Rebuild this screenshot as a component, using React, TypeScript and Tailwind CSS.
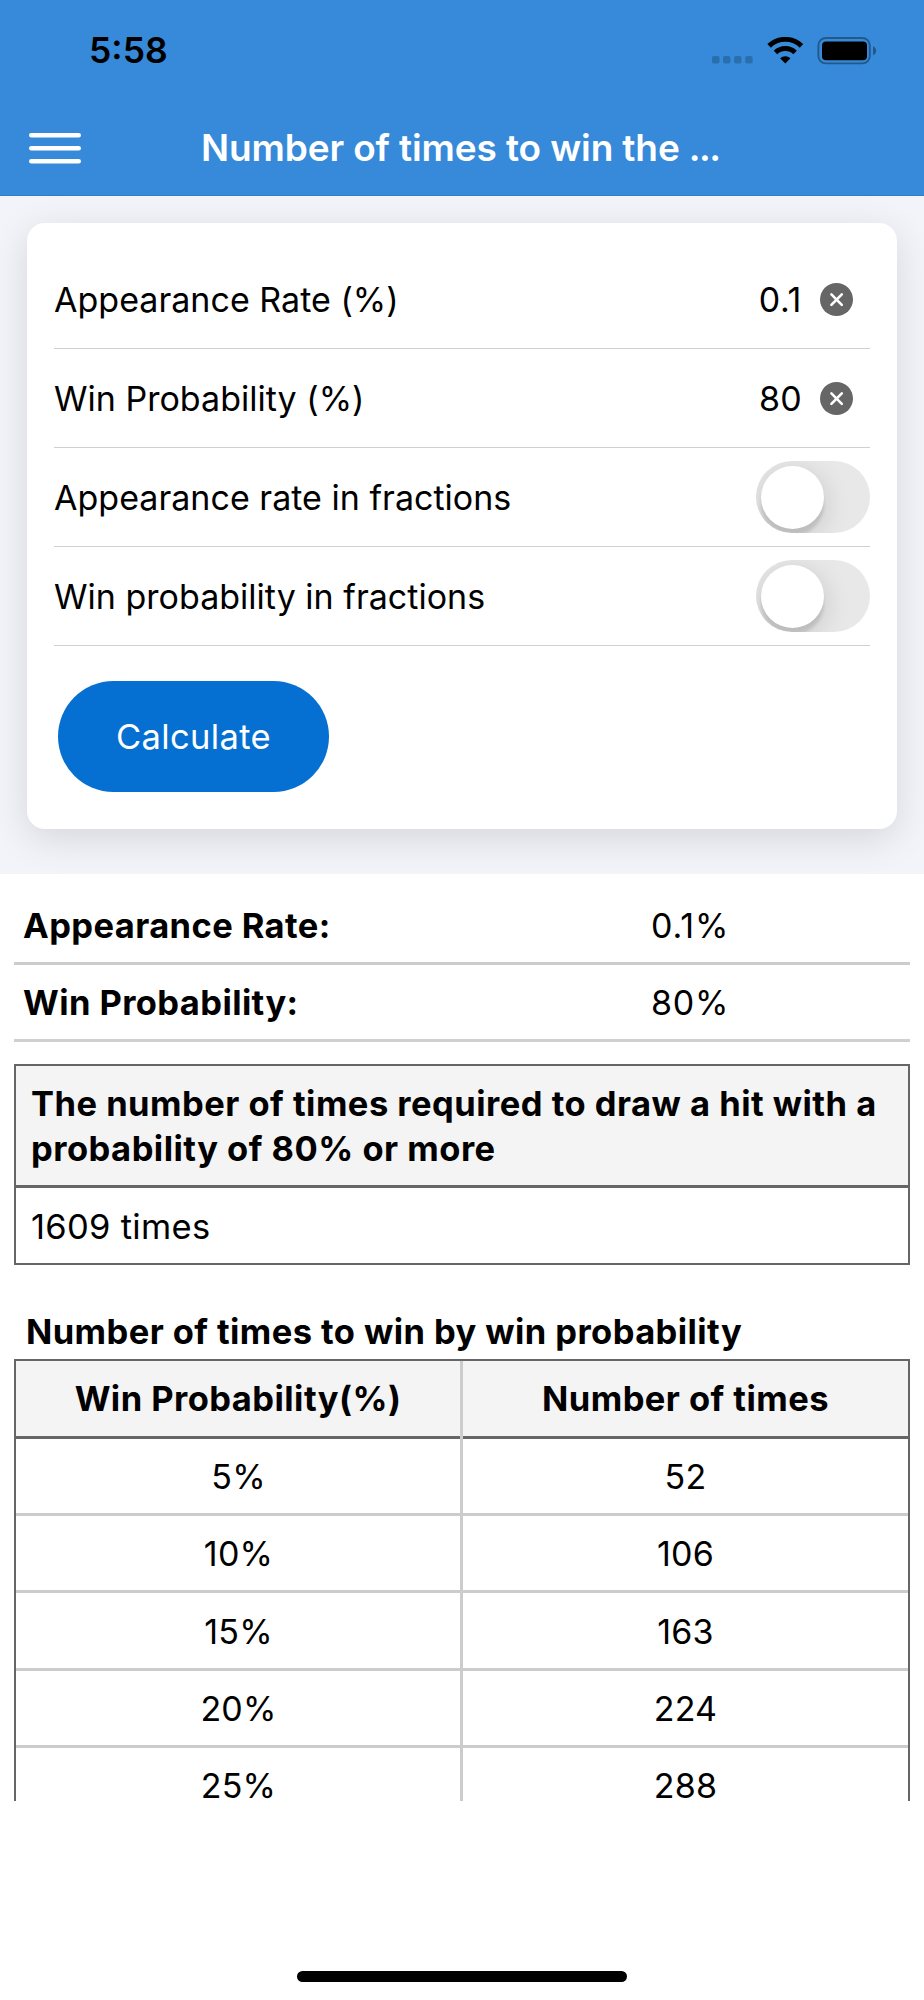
import { useState } from "react";
import { clsx } from "clsx";

const results = [
  { rate: "5%", times: "52" },
  { rate: "10%", times: "106" },
  { rate: "15%", times: "163" },
  { rate: "20%", times: "224" },
  { rate: "25%", times: "288" },
];

function StatusBar() {
  return (
    <div className="flex h-[101px] items-center justify-between pl-[89px] pr-[47px]">
      <span className="text-[35.5px] leading-none font-semibold text-black">5:58</span>
      <div className="flex items-center">
        <svg width="42" height="28" viewBox="0 0 42 28" fill="#2a6fad">
          <rect x="0" y="19" width="7.5" height="7.5" rx="2" />
          <rect x="11" y="19" width="7.5" height="7.5" rx="2" />
          <rect x="22" y="19" width="7.5" height="7.5" rx="2" />
          <rect x="33.2" y="19" width="7.5" height="7.5" rx="2" />
        </svg>
        <svg className="ml-[13px]" width="37" height="28" viewBox="0 0 37 28" fill="none" stroke="black">
          <path d="M2.1 8.9a23.3 23.3 0 0 1 32.4 0" strokeWidth="5" />
          <path d="M8.5 15.5a14.2 14.2 0 0 1 19.6 0" strokeWidth="5" />
          <path d="M13.1 21.2a7.6 7.6 0 0 1 10.4 0L18.3 26.5Z" fill="black" stroke="none" />
        </svg>
        <svg className="ml-[13px]" width="60" height="28" viewBox="0 0 60 28" fill="none">
          <rect x="1.4" y="1" width="51.4" height="25.4" rx="7.5" stroke="#22598b" strokeWidth="1.9" />
          <rect x="5" y="4.5" width="45" height="18.7" rx="4" fill="black" />
          <path d="M56 9.2c1.9.7 3.2 2.4 3.2 4.5s-1.3 3.8-3.2 4.5Z" fill="#22598b" />
        </svg>
      </div>
    </div>
  );
}

function ClearButton({ onClick }: { onClick: () => void }) {
  return (
    <button onClick={onClick} className="ml-[18px] mr-[17px]" aria-label="Clear">
      <svg width="33" height="33" viewBox="0 0 33 33">
        <circle cx="16.5" cy="16.5" r="16.5" fill="#666" />
        <path d="M11.4 11.4l10.4 10.4M21.8 11.4L11.4 21.8" stroke="white" strokeWidth="2.6" strokeLinecap="round" />
      </svg>
    </button>
  );
}

function Switch() {
  const [on, setOn] = useState(false);
  return (
    <button
      role="switch"
      aria-checked={on}
      onClick={() => setOn(!on)}
      className={clsx(
        "h-[72px] w-[114px] overflow-hidden rounded-full p-[4.5px] transition-colors",
        on ? "bg-[#0570d1]" : "bg-[#e8e8e8]",
      )}
    >
      <div
        className={clsx(
          "size-[63px] rounded-full bg-white shadow-[0_7px_28px_rgba(0,0,0,0.16),0_7px_3px_rgba(0,0,0,0.1)] transition-transform",
          on && "translate-x-[42px]",
        )}
      />
    </button>
  );
}

function FormRow({ label, children }: { label: string; children: React.ReactNode }) {
  return (
    <div className="flex h-[99px] items-center justify-between border-b border-[#cfd0d0]">
      <span className="pt-0.5 tracking-[0.02px]">{label}</span>
      <div className="flex items-center">{children}</div>
    </div>
  );
}

export default function App() {
  const [rate, setRate] = useState("0.1");
  const [prob, setProb] = useState("80");

  return (
    <div className="flex h-[2000px] w-[924px] flex-col overflow-hidden bg-white font-['Inter',sans-serif] text-[34px] leading-[44.5px] text-black">
      <header className="h-[196px] shrink-0 border-b border-[#2f7dc4] bg-[#368ad9]">
        <StatusBar />
        <div className="flex h-[94px] items-center pl-[29px]">
          <svg width="52" height="32" viewBox="0 0 52 32" stroke="white" strokeWidth="4.6" strokeLinecap="round">
            <path d="M2.3 3.3h47.4M2.3 16.3h47.4M2.3 29.3h47.4" />
          </svg>
          <h1 className="ml-[120px] pt-px text-[37px] font-semibold tracking-[-0.12px] whitespace-nowrap text-white">
            Number of times to win the <span className="tracking-[-1.6px]">...</span>
          </h1>
        </div>
      </header>

      <section className="h-[677.5px] shrink-0 overflow-hidden bg-[#f3f4f9] px-[27px] pt-[27px]">
        <div className="h-[606px] rounded-[18px] bg-white px-[27px] pt-[27px] shadow-[0_9.5px_38px_rgba(0,0,0,0.12)]">
          <FormRow label="Appearance Rate (%)">
            <span className="pt-0.5 tracking-[0.7px]">{rate}</span>
            <ClearButton onClick={() => setRate("")} />
          </FormRow>
          <FormRow label="Win Probability (%)">
            <span className="pt-0.5 tracking-[0.3px]">{prob}</span>
            <ClearButton onClick={() => setProb("")} />
          </FormRow>
          <FormRow label="Appearance rate in fractions">
            <Switch />
          </FormRow>
          <FormRow label="Win probability in fractions">
            <Switch />
          </FormRow>
          <button className="mt-[35px] ml-1 flex h-[111px] w-[271px] items-center justify-center rounded-full bg-[#0570d1] text-white">
            <span className="pt-0.5 text-[34.5px] tracking-[0.35px]">Calculate</span>
          </button>
        </div>
      </section>

      <main className="h-[927.5px] shrink-0 overflow-hidden px-3.5 pt-[14.5px]">
        <div className="flex h-[77px] items-center border-b-[3px] border-[#ccc] pt-0.5 pl-[9px]">
          <span className="w-[628px] text-[34.5px] font-bold tracking-[0.4px]">Appearance Rate:</span>
          <span className="tracking-[0.9px]">0.1%</span>
        </div>
        <div className="flex h-[77px] items-center border-b-[3px] border-[#d0d0d0] pt-[3px] pl-[9px]">
          <span className="w-[628px] text-[34.5px] font-bold tracking-[0.4px]">Win Probability:</span>
          <span className="tracking-[0.7px]">80%</span>
        </div>

        <div className="mt-[22px] border-2 border-[#666]">
          <div className="h-[122px] border-b-[3px] border-[#666] bg-[#f4f4f4] pt-4 pl-[15px] text-[34.5px] font-bold tracking-[0.48px] whitespace-nowrap">
            <div>The number of times required to draw a hit with a</div>
            <div>probability of 80% or more</div>
          </div>
          <div className="flex h-[74.5px] items-center pt-1 pl-[15px]">
            <span className="text-[34.5px] tracking-[0.3px]">1609 times</span>
          </div>
        </div>

        <h2 className="mt-[45.5px] h-[48.5px] pl-3 text-[34.5px] font-bold tracking-[0.42px]">
          Number of times to win by win probability
        </h2>
        <div className="border-2 border-[#666]">
          <div className="grid h-[78.3px] grid-cols-[447px_1fr] bg-[#f4f4f4] text-[34.5px] font-bold tracking-[0.45px]">
            {/* the column line runs through the header rule */}
            <div className="border-r-[3px] border-[#ccc]">
              <div className="flex h-full items-center justify-center border-b-[3px] border-[#666] pt-0.5">Win Probability(%)</div>
            </div>
            <div className="flex items-center justify-center border-b-[3px] border-[#666] pt-0.5">Number of times</div>
          </div>
          {results.map((row) => (
            <div key={row.rate} className="grid h-[77.3px] grid-cols-[447px_1fr] leading-none tracking-[0.2px]">
              <div className="flex items-center justify-center border-r-[3px] border-b-[3px] border-[#ccc] pt-0.5 pl-px">{row.rate}</div>
              <div className="flex items-center justify-center border-b-[3px] border-[#ccc] pt-0.5">{row.times}</div>
            </div>
          ))}
        </div>
      </main>

      <footer className="flex flex-1 items-end justify-center pb-[18px]">
        <div className="h-[11px] w-[330px] rounded-full bg-black" />
      </footer>
    </div>
  );
}
